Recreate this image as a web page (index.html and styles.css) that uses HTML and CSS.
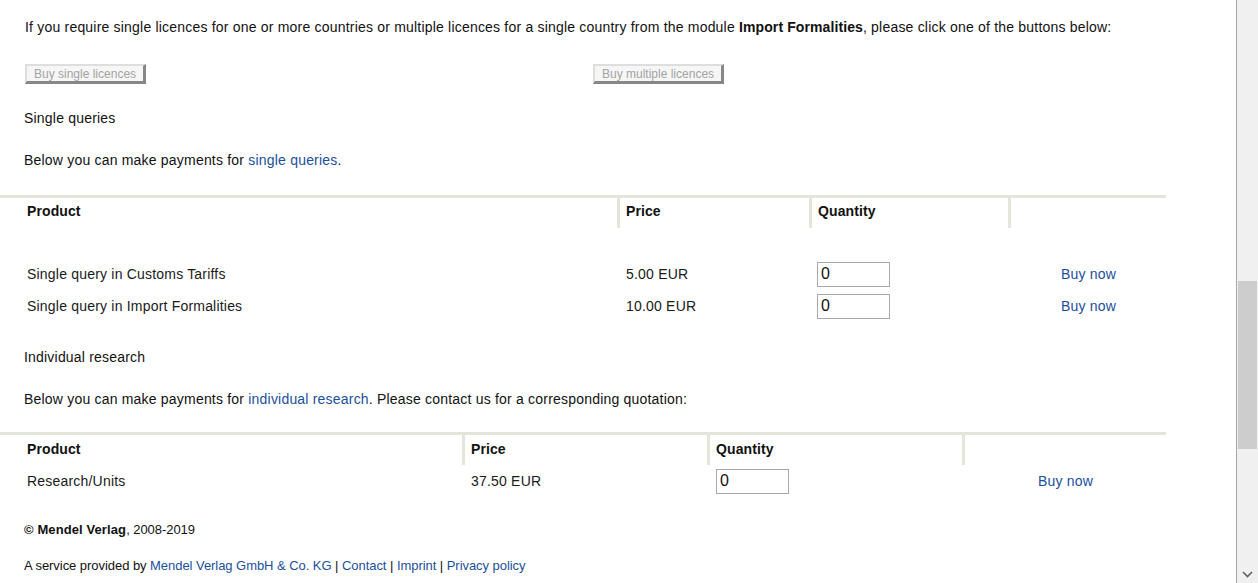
FILE: index.html
```html
<!DOCTYPE html>
<html lang="en">
<head>
  <meta charset="UTF-8">
  <title>Payments - Mendel Verlag</title>
  <link rel="stylesheet" href="styles.css">
</head>
<body>
  <div class="window">
    <div class="content">
      <p class="intro">If you require single licences for one or more countries or multiple licences for a single country from the module <b>Import Formalities</b>, please click one of the buttons below:</p>

      <div class="buttons">
        <div class="btn-cell"><button disabled>Buy single licences</button></div>
        <div class="btn-cell"><button disabled>Buy multiple licences</button></div>
      </div>

      <p class="section-title">Single queries</p>
      <p class="lead">Below you can make payments for <a href="#">single queries</a>.</p>

      <table class="products t1">
        <colgroup>
          <col class="c1"><col class="c2"><col class="c3"><col class="c4">
        </colgroup>
        <thead>
          <tr><th>Product</th><th>Price</th><th>Quantity</th><th></th></tr>
        </thead>
        <tbody>
          <tr class="spacer"><td colspan="4"></td></tr>
          <tr>
            <td>Single query in Customs Tariffs</td>
            <td>5.00 EUR</td>
            <td><input type="text" value="0"></td>
            <td class="buy"><a href="#">Buy now</a></td>
          </tr>
          <tr>
            <td>Single query in Import Formalities</td>
            <td>10.00 EUR</td>
            <td><input type="text" value="0"></td>
            <td class="buy"><a href="#">Buy now</a></td>
          </tr>
        </tbody>
      </table>

      <p class="section-title after-table">Individual research</p>
      <p class="lead">Below you can make payments for <a href="#">individual research</a>. Please contact us for a corresponding quotation:</p>

      <table class="products t2">
        <colgroup>
          <col class="c1"><col class="c2"><col class="c3"><col class="c4">
        </colgroup>
        <thead>
          <tr><th>Product</th><th>Price</th><th>Quantity</th><th></th></tr>
        </thead>
        <tbody>
          <tr>
            <td>Research/Units</td>
            <td>37.50 EUR</td>
            <td><input type="text" value="0"></td>
            <td class="buy"><a href="#">Buy now</a></td>
          </tr>
        </tbody>
      </table>

      <div class="footer">
        <p class="copy"><b>&copy; Mendel Verlag</b>, 2008-2019</p>
        <p class="service">A service provided by <a href="#">Mendel Verlag GmbH &amp; Co. KG</a> | <a href="#">Contact</a> | <a href="#">Imprint</a> | <a href="#">Privacy policy</a></p>
      </div>
    </div>

    <div class="scrollbar">
      <div class="track"><div class="thumb"></div></div>
      <div class="arrow">
        <svg width="11" height="7" viewBox="0 0 11 7"><polyline points="1,1 5.5,5.5 10,1" fill="none" stroke="#606060" stroke-width="1.6"/></svg>
      </div>
    </div>
  </div>
</body>
</html>
```

FILE: styles.css
```css
html, body { margin: 0; padding: 0; height: 100%; overflow: hidden; }
body { font-family: "Liberation Sans", Arial, sans-serif; font-size: 14px; color: #111; background: #fff; letter-spacing: 0.2px; }
a { color: #1c4f9c; text-decoration: none; }
b, th { letter-spacing: 0.1px; }

.window { display: flex; height: 583px; }
.content { width: 1236px; flex: none; height: 583px; overflow: hidden; border-right: 1px solid #a5a5a5; }

p { margin: 0; line-height: 18px; }
.intro { padding: 18px 0 0 25px; }
.section-title { margin: 25px 0 0 24px; }
.section-title.after-table { margin-top: 26px; }
.lead { margin: 24px 0 0 24px; }

.buttons { display: flex; margin: 28px 0 0 25px; width: 1136px; }
.btn-cell { flex: 1; }
button { font-family: "Liberation Sans", Arial, sans-serif; font-size: 12px; letter-spacing: 0; color: #a3a3a3; background: #f6f6f6; height: 20px; padding: 0 7px; border: 2px solid; border-width: 2px 3px 3px 2px; border-color: #dedede #868686 #868686 #dedede; border-radius: 0; }

.products { border-collapse: separate; border-spacing: 0; table-layout: fixed; width: 1166px; margin-top: 26px; }
.products th { height: 26px; padding: 0 0 4px 6px; border-top: 3px solid #e3e5db; border-left: 3px solid #e3e5db; text-align: left; font-weight: bold; font-size: 14px; vertical-align: middle; }
.products th:first-child { border-left: none; padding-left: 27px; }
.products td { height: 32px; padding: 0 0 0 9px; vertical-align: middle; color: #1a1a1a; }
.products td:first-child { padding-left: 27px; }
.products .spacer td { height: 30px; }
.products td.buy { text-align: center; padding-left: 3px; }

.t1 .c1 { width: 617px; }
.t1 .c2 { width: 192px; }
.t1 .c3 { width: 199px; }
.t1 .c4 { width: 158px; }
.t2 { margin-top: 24px; }
.t2 th { height: 27px; padding-bottom: 3px; }
.t2 .c1 { width: 462px; }
.t2 .c2 { width: 245px; }
.t2 .c3 { width: 255px; }
.t2 .c4 { width: 204px; }

input { box-sizing: border-box; width: 73px; height: 25px; margin-left: -1px; padding: 0 3px; border: 1px solid #a9a9a9; font-family: "Liberation Sans", Arial, sans-serif; font-size: 16px; color: #111; display: block; }
.t2 input { margin-left: 0; }

.footer { font-size: 13px; padding-left: 24px; letter-spacing: -0.05px; }
.footer .copy { margin-top: 24px; }
.footer .service { margin-top: 18px; }

.scrollbar { flex: 1; background: #f0f0f0; display: flex; flex-direction: column; }
.track { flex: 1; padding-top: 281px; }
.thumb { height: 168px; margin: 0 1px 0 1px; background: #cdcdcd; }
.arrow { height: 17px; display: flex; align-items: center; justify-content: center; }
```
